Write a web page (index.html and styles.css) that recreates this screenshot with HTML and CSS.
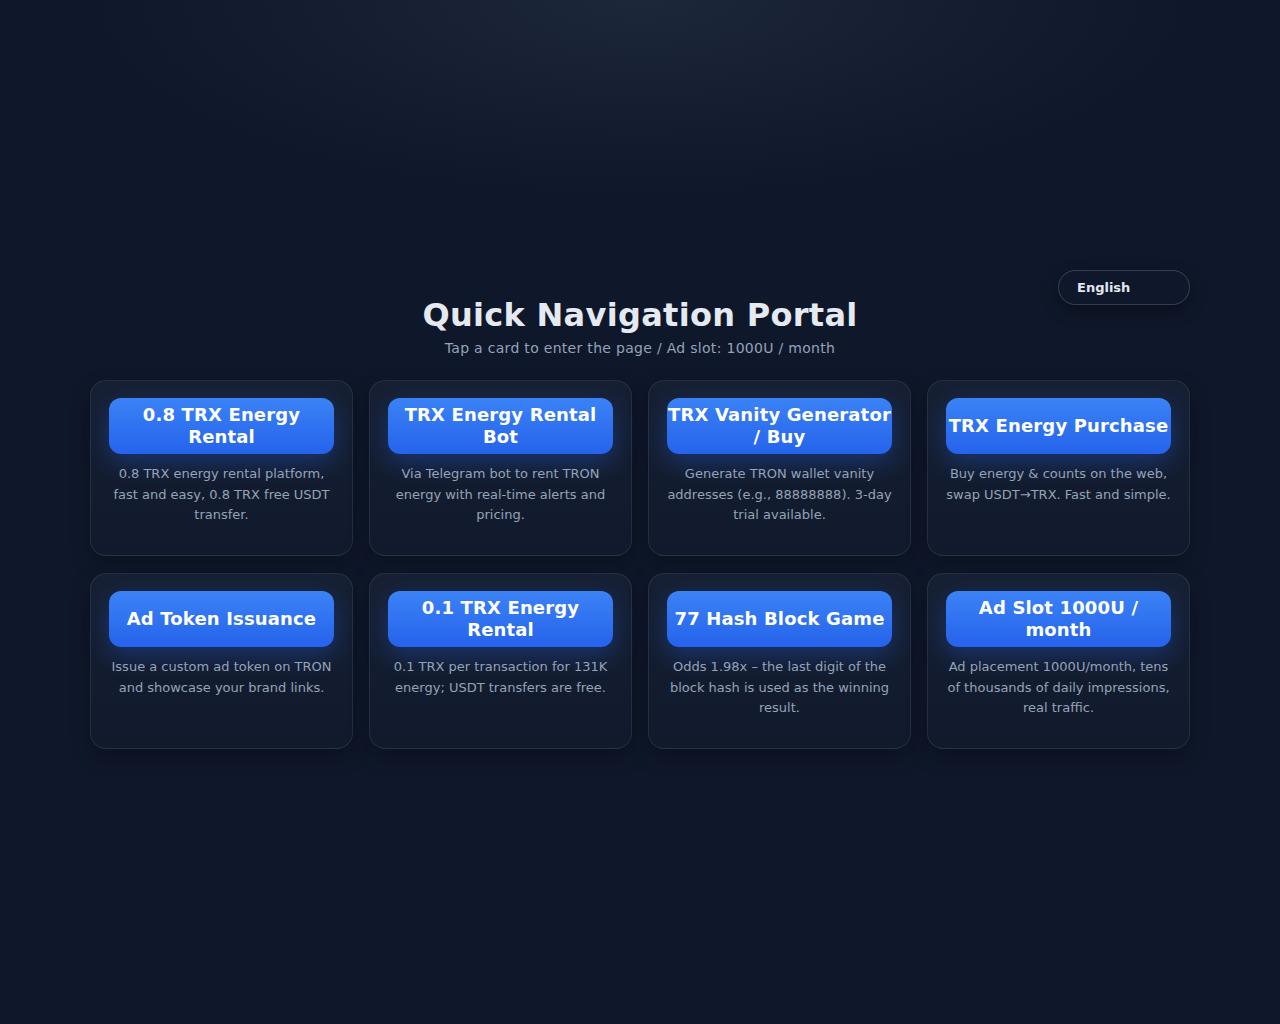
FILE: index.html
```html
<!DOCTYPE html>
<html lang="en">
<head>
  <title>Quick Navigation Portal</title>
  <meta charset="UTF-8"/>
  <meta name="viewport" content="width=device-width,initial-scale=1"/>
  <link rel="stylesheet" href="styles.css">
</head>
<body>
<main class="portal">
  <select class="lang-select" name="lang">
    <option>English</option>
    <option>中文</option>
  </select>

  <h1 class="portal-title">Quick Navigation Portal</h1>
  <p class="portal-sub">Tap a card to enter the page / Ad slot: 1000U / month</p>

  <div class="card-grid">
    <a class="card" href="#">
      <span class="card-btn">0.8 TRX Energy Rental</span>
      <p class="card-desc">0.8 TRX energy rental platform, fast and easy, 0.8 TRX free USDT transfer.</p>
    </a>
    <a class="card" href="#">
      <span class="card-btn">TRX Energy Rental Bot</span>
      <p class="card-desc">Via Telegram bot to rent TRON energy with real-time alerts and pricing.</p>
    </a>
    <a class="card" href="#">
      <span class="card-btn">TRX Vanity Generator / Buy</span>
      <p class="card-desc">Generate TRON wallet vanity addresses (e.g., 88888888). 3-day trial available.</p>
    </a>
    <a class="card" href="#">
      <span class="card-btn">TRX Energy Purchase</span>
      <p class="card-desc">Buy energy &amp; counts on the web, swap USDT→TRX. Fast and simple.</p>
    </a>
    <a class="card" href="#">
      <span class="card-btn">Ad Token Issuance</span>
      <p class="card-desc">Issue a custom ad token on TRON and showcase your brand links.</p>
    </a>
    <a class="card" href="#">
      <span class="card-btn">0.1 TRX Energy Rental</span>
      <p class="card-desc">0.1 TRX per transaction for 131K energy; USDT transfers are free.</p>
    </a>
    <a class="card" href="#">
      <span class="card-btn">77 Hash Block Game</span>
      <p class="card-desc">Odds 1.98x – the last digit of the block hash is used as the winning result.</p>
    </a>
    <a class="card" href="#">
      <span class="card-btn">Ad Slot 1000U / month</span>
      <p class="card-desc">Ad placement 1000U/month, tens of thousands of daily impressions, real traffic.</p>
    </a>
  </div>
</main>
</body>
</html>
```

FILE: styles.css
```css
html {
  background: #0f172a;
}

body {
  margin: 0;
  min-height: 100vh;
  display: flex;
  align-items: center;
  justify-content: center;
  font-family: "DejaVu Sans", Verdana, sans-serif;
  color: #e2e8f0;
  background:
    radial-gradient(ellipse 560px 200px at 50% 0, rgba(30, 41, 59, 0.9), rgba(30, 41, 59, 0) 100%),
    #0f172a;
}

.portal {
  position: relative;
  width: 1100px;
  padding: 26px 0 5px;
  text-align: center;
}

.lang-select {
  position: absolute;
  top: 0;
  right: 0;
  width: 132px;
  height: 35px;
  padding: 0 18px;
  appearance: none;
  -webkit-appearance: none;
  border: 1px solid rgba(148, 163, 184, 0.28);
  border-radius: 18px;
  background: #0f172a;
  color: #e2e8f0;
  font-family: inherit;
  font-size: 13px;
  font-weight: bold;
  box-shadow: 0 6px 16px rgba(0, 0, 0, 0.35);
}

.portal-title {
  margin: 0;
  font-size: 32px;
  line-height: 38px;
  letter-spacing: 0.3px;
  color: #e5e9f0;
}

.portal-sub {
  margin: 5px 0 23px;
  font-size: 14px;
  line-height: 18px;
  letter-spacing: 0.3px;
  color: #94a3b8;
}

.card-grid {
  display: grid;
  grid-template-columns: repeat(4, 1fr);
  gap: 17px 16px;
}

.card {
  display: flex;
  flex-direction: column;
  min-height: 176px;
  box-sizing: border-box;
  padding: 17px 18px 18px;
  border: 1px solid rgba(148, 163, 184, 0.14);
  border-radius: 16px;
  background: linear-gradient(180deg, #172033 0%, #111a2c 100%);
  box-shadow: 0 8px 20px rgba(0, 0, 0, 0.25);
  text-decoration: none;
}

.card-btn {
  display: flex;
  align-items: center;
  justify-content: center;
  min-height: 56px;
  box-sizing: border-box;
  padding: 5px 0;
  border-radius: 12px;
  background: linear-gradient(180deg, #3b82f6 0%, #2563eb 100%);
  box-shadow: 0 8px 24px rgba(37, 99, 235, 0.35);
  color: #fff;
  font-size: 18px;
  font-weight: bold;
  line-height: 22px;
  letter-spacing: 0.15px;
}

.card-desc {
  margin: 10px 0 0;
  font-size: 13px;
  line-height: 20.5px;
  color: #94a3b8;
}
```
